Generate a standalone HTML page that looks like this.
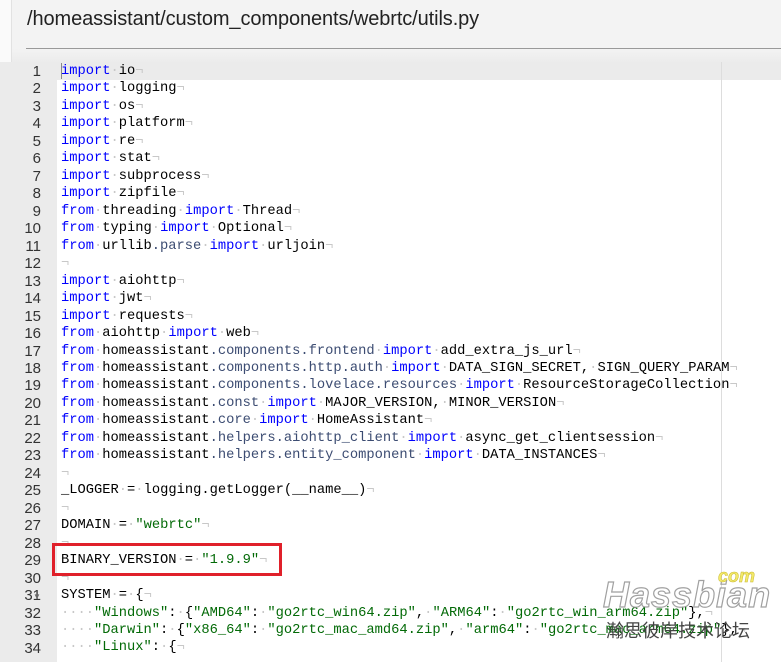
<!DOCTYPE html>
<html><head><meta charset="utf-8"><style>
body{margin:0;width:781px;height:646px;overflow:hidden;background:#fff;position:relative;font-family:"Liberation Sans",sans-serif}
#hdr{position:absolute;left:0;top:0;width:781px;height:62px;background:#f3f3f3}
#strip{position:absolute;left:0;top:0;width:11px;height:62px;background:#fafafa;border-right:1px solid #e2e2e2}
#title{position:absolute;left:27px;top:8px;font-size:20px;color:#222;letter-spacing:-0.1px}
#hr{position:absolute;left:26px;right:0;top:48px;height:1px;background:#999}
#sh{position:absolute;left:12px;right:0;top:49px;height:13px;background:linear-gradient(#f3f3f3,#ececec)}
#gut{position:absolute;left:0;top:62px;width:57px;height:600px;background:#ebebeb}
#act{position:absolute;left:57px;top:62px;width:724px;height:18px;background:#ebebeb}
#pm{position:absolute;left:721px;top:62px;width:1px;height:600px;background:#ddd}
.ln{position:absolute;left:0;width:41px;text-align:right;font:15px/17.47px "Liberation Sans",sans-serif;color:#333}
pre{position:absolute;left:61px;top:63px;margin:0;font:13.75px/17.47px "Liberation Mono",monospace;color:#000}
.k{color:#0000ff}.s{color:#036a07}.a{color:#3c4c72}.i{color:#c8c8c8}
#box{position:absolute;left:52px;top:543px;width:224px;height:27px;border:3px solid #e0202a}
#cursor{position:absolute;left:61px;top:63px;width:1px;height:16px;background:#888}
</style></head><body>
<div id="hdr"></div><div id="strip"></div>
<div id="title">/homeassistant/custom_components/webrtc/utils.py</div>
<div id="hr"></div><div id="sh"></div>
<div id="gut"></div><div id="act"></div><div id="pm"></div>
<div id="lns"></div>
<pre><span class="k">import</span><span class="i">·</span>io<span class="i">¬</span>
<span class="k">import</span><span class="i">·</span>logging<span class="i">¬</span>
<span class="k">import</span><span class="i">·</span>os<span class="i">¬</span>
<span class="k">import</span><span class="i">·</span>platform<span class="i">¬</span>
<span class="k">import</span><span class="i">·</span>re<span class="i">¬</span>
<span class="k">import</span><span class="i">·</span>stat<span class="i">¬</span>
<span class="k">import</span><span class="i">·</span>subprocess<span class="i">¬</span>
<span class="k">import</span><span class="i">·</span>zipfile<span class="i">¬</span>
<span class="k">from</span><span class="i">·</span>threading<span class="i">·</span><span class="k">import</span><span class="i">·</span>Thread<span class="i">¬</span>
<span class="k">from</span><span class="i">·</span>typing<span class="i">·</span><span class="k">import</span><span class="i">·</span>Optional<span class="i">¬</span>
<span class="k">from</span><span class="i">·</span>urllib<span class="a">.parse</span><span class="i">·</span><span class="k">import</span><span class="i">·</span>urljoin<span class="i">¬</span>
<span class="i">¬</span>
<span class="k">import</span><span class="i">·</span>aiohttp<span class="i">¬</span>
<span class="k">import</span><span class="i">·</span>jwt<span class="i">¬</span>
<span class="k">import</span><span class="i">·</span>requests<span class="i">¬</span>
<span class="k">from</span><span class="i">·</span>aiohttp<span class="i">·</span><span class="k">import</span><span class="i">·</span>web<span class="i">¬</span>
<span class="k">from</span><span class="i">·</span>homeassistant<span class="a">.components.frontend</span><span class="i">·</span><span class="k">import</span><span class="i">·</span>add_extra_js_url<span class="i">¬</span>
<span class="k">from</span><span class="i">·</span>homeassistant<span class="a">.components.http.auth</span><span class="i">·</span><span class="k">import</span><span class="i">·</span>DATA_SIGN_SECRET,<span class="i">·</span>SIGN_QUERY_PARAM<span class="i">¬</span>
<span class="k">from</span><span class="i">·</span>homeassistant<span class="a">.components.lovelace.resources</span><span class="i">·</span><span class="k">import</span><span class="i">·</span>ResourceStorageCollection<span class="i">¬</span>
<span class="k">from</span><span class="i">·</span>homeassistant<span class="a">.const</span><span class="i">·</span><span class="k">import</span><span class="i">·</span>MAJOR_VERSION,<span class="i">·</span>MINOR_VERSION<span class="i">¬</span>
<span class="k">from</span><span class="i">·</span>homeassistant<span class="a">.core</span><span class="i">·</span><span class="k">import</span><span class="i">·</span>HomeAssistant<span class="i">¬</span>
<span class="k">from</span><span class="i">·</span>homeassistant<span class="a">.helpers.aiohttp_client</span><span class="i">·</span><span class="k">import</span><span class="i">·</span>async_get_clientsession<span class="i">¬</span>
<span class="k">from</span><span class="i">·</span>homeassistant<span class="a">.helpers.entity_component</span><span class="i">·</span><span class="k">import</span><span class="i">·</span>DATA_INSTANCES<span class="i">¬</span>
<span class="i">¬</span>
_LOGGER<span class="i">·</span>=<span class="i">·</span>logging.getLogger(__name__)<span class="i">¬</span>
<span class="i">¬</span>
DOMAIN<span class="i">·</span>=<span class="i">·</span><span class="s">"webrtc"</span><span class="i">¬</span>
<span class="i">¬</span>
BINARY_VERSION<span class="i">·</span>=<span class="i">·</span><span class="s">"1.9.9"</span><span class="i">¬</span>
<span class="i">¬</span>
SYSTEM<span class="i">·</span>=<span class="i">·</span>{<span class="i">¬</span>
<span class="i">····</span><span class="s">"Windows"</span>:<span class="i">·</span>{<span class="s">"AMD64"</span>:<span class="i">·</span><span class="s">"go2rtc_win64.zip"</span>,<span class="i">·</span><span class="s">"ARM64"</span>:<span class="i">·</span><span class="s">"go2rtc_win_arm64.zip"</span>},<span class="i">¬</span>
<span class="i">····</span><span class="s">"Darwin"</span>:<span class="i">·</span>{<span class="s">"x86_64"</span>:<span class="i">·</span><span class="s">"go2rtc_mac_amd64.zip"</span>,<span class="i">·</span><span class="s">"arm64"</span>:<span class="i">·</span><span class="s">"go2rtc_mac_arm64.zip"</span>},<span class="i">¬</span>
<span class="i">····</span><span class="s">"Linux"</span>:<span class="i">·</span>{<span class="i">¬</span>
</pre>
<div id="cursor"></div>
<div id="box"></div>
<div style="position:absolute;left:33px;top:592px;font-size:8px;color:#666">▼</div>
<div style="position:absolute;left:603px;top:574px;font:italic bold 36px 'Liberation Sans',sans-serif;color:#fff;-webkit-text-stroke:1.2px #999;letter-spacing:1px;opacity:.92">Hassbian</div>
<div style="position:absolute;left:718px;top:566px;font:italic bold 18px 'Liberation Sans',sans-serif;color:#f3e96a;-webkit-text-stroke:0.5px #c9b930">com</div>
<div style="position:absolute;left:606px;top:617px;font:18px 'Noto Sans CJK SC',sans-serif;color:#444">瀚思彼岸技术论坛</div>
<script>
var h='';for(var n=1;n<=34;n++){h+='<div class="ln" style="top:'+(63+(n-1)*17.47)+'px">'+n+'</div>';}
document.getElementById('lns').innerHTML=h;
</script>
</body></html>
